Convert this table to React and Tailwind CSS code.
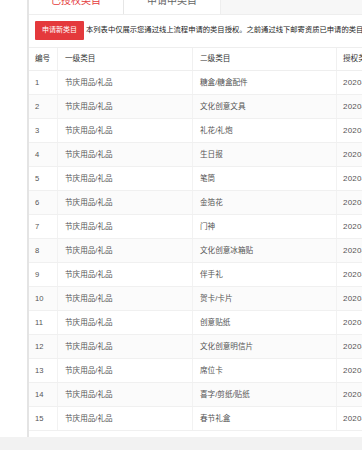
import React from "react";

const rows = [
  "糖盒/糖盒配件",
  "文化创意文具",
  "礼花/礼炮",
  "生日报",
  "笔筒",
  "金箔花",
  "门神",
  "文化创意冰箱贴",
  "伴手礼",
  "贺卡/卡片",
  "创意贴纸",
  "文化创意明信片",
  "席位卡",
  "喜字/剪纸/贴纸",
  "春节礼盒",
];

const font = { fontFamily: '"Liberation Sans","Noto Sans CJK SC",sans-serif' };

export default function App() {
  return (
    <div className="w-[362px] h-[450px] overflow-hidden bg-white flex flex-col" style={font}>
      <div className="flex flex-1 min-h-0">
        <div className="w-[27px] shrink-0 bg-white" />
        <div className="w-[2px] shrink-0 bg-[#e4e4e4]" />
        <div className="flex-1 flex flex-col min-w-0 overflow-hidden">
          <div className="h-[15px] shrink-0 overflow-hidden border-b border-[#eeeeee] bg-[#f7f7f7]">
            <div className="-mt-[15px] h-[30px] flex">
              <div className="w-[95px] h-full bg-white border-r border-[#e6e6e6] flex items-center justify-center text-[10px] text-[#e4393c]">
                已授权类目
              </div>
              <div className="w-[97px] h-full bg-white border-r border-[#eeeeee] flex items-center justify-center text-[10px] text-[#666666]">
                申请中类目
              </div>
            </div>
          </div>
          <div className="flex items-center pl-[6px] pt-[5px] h-[25px] shrink-0 whitespace-nowrap">
            <div className="w-[49px] h-[19px] bg-[#e4393c] text-white text-[7px] flex items-center justify-center rounded-[1px] shrink-0">
              申请新类目
            </div>
            <div className="ml-[2px] text-[7.3px] text-[#222222]">
              本列表中仅展示您通过线上流程申请的类目授权。之前通过线下邮寄资质已申请的类目，请到资质管理中查看
            </div>
          </div>
          <div className="mt-[7px] w-[440px] text-[7.6px]">
            <div className="grid grid-cols-[29px_135px_144px_132px] h-[24px] items-center border-t border-b border-[#eeeeee] text-[#333333]">
              <div className="pl-[6px] h-full flex items-center border-r border-[#f0f0f0]">编号</div>
              <div className="pl-[7px] h-full flex items-center border-r border-[#f0f0f0]">一级类目</div>
              <div className="pl-[7px] h-full flex items-center border-r border-[#f0f0f0]">二级类目</div>
              <div className="pl-[6px] h-full flex items-center">授权类目时间</div>
            </div>
            {rows.map((r, i) => (
              <div
                key={i}
                className={
                  "grid grid-cols-[29px_135px_144px_132px] h-[24px] items-center border-b border-[#f0f0f0] text-[#555555] " +
                  (i % 2 === 1 ? "bg-[#fbfbfb]" : "bg-white")
                }
              >
                <div className="pl-[6px] h-full flex items-center border-r border-[#f2f2f2]">{i + 1}</div>
                <div className="pl-[7px] h-full flex items-center border-r border-[#f2f2f2]">节庆用品/礼品</div>
                <div className="pl-[7px] h-full flex items-center border-r border-[#f2f2f2]">{r}</div>
                <div className="pl-[6px] h-full flex items-center text-[8px] tracking-[0.2px]">2020-01-01</div>
              </div>
            ))}
          </div>
        </div>
      </div>
      <div className="h-[13px] shrink-0 bg-[#f2f2f2]" />
    </div>
  );
}
